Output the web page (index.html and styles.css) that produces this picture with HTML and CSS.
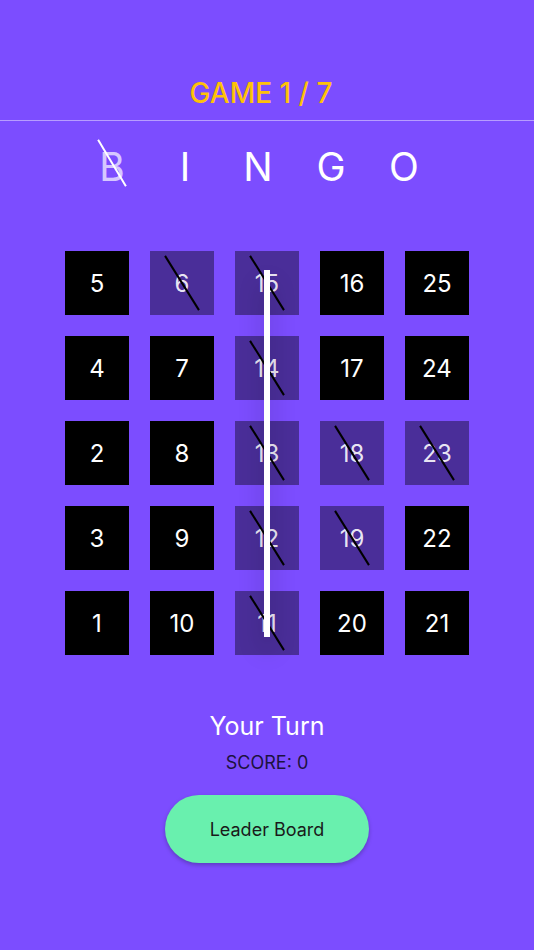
FILE: index.html
```html
<!DOCTYPE html>
<html>
<head>
<meta charset="utf-8">
<link rel="stylesheet" href="styles.css">
</head>
<body>
<div class="screen">
  <header class="header">
    <div class="title">GAME 1 / 7</div>
  </header>
  <div class="bingo">
    <span class="letter done">B</span>
    <span class="letter">I</span>
    <span class="letter">N</span>
    <span class="letter">G</span>
    <span class="letter">O</span>
  </div>
  <div class="board">
    <div class="cell">5</div>
    <div class="cell hit">6</div>
    <div class="cell hit">15</div>
    <div class="cell">16</div>
    <div class="cell">25</div>

    <div class="cell">4</div>
    <div class="cell">7</div>
    <div class="cell hit">14</div>
    <div class="cell">17</div>
    <div class="cell">24</div>

    <div class="cell">2</div>
    <div class="cell">8</div>
    <div class="cell hit">13</div>
    <div class="cell hit">18</div>
    <div class="cell hit">23</div>

    <div class="cell">3</div>
    <div class="cell">9</div>
    <div class="cell hit">12</div>
    <div class="cell hit">19</div>
    <div class="cell">22</div>

    <div class="cell">1</div>
    <div class="cell">10</div>
    <div class="cell hit">11</div>
    <div class="cell">20</div>
    <div class="cell">21</div>
    <div class="strike"></div>
  </div>
  <div class="turn">Your Turn</div>
  <div class="score">SCORE: 0</div>
  <div class="actions">
    <button class="leader">Leader Board</button>
  </div>
</div>
</body>
</html>
```
FILE: styles.css
```css
html, body {
  margin: 0;
  padding: 0;
}
body {
  background: #7c4dff;
  font-family: Inter, "Noto Sans", sans-serif;
  width: 534px;
  height: 950px;
  overflow: hidden;
}
.screen {
  display: flex;
  flex-direction: column;
  align-items: stretch;
}
.header {
  padding: 76px 0 10px;
  border-bottom: 1px solid rgba(255, 255, 255, 0.45);
}
.title {
  text-align: center;
  color: #ffc107;
  font-size: 28px;
  line-height: 34px;
  font-weight: 500;
  padding-right: 12px;
}
.bingo {
  margin-top: 22px;
  display: flex;
  justify-content: center;
  padding-right: 18px;
}
.letter {
  width: 73px;
  text-align: center;
  color: #fff;
  font-size: 39px;
  line-height: 48px;
  position: relative;
}
.letter.done {
  color: rgba(255, 255, 255, 0.7);
}
.letter.done::after {
  content: "";
  position: absolute;
  left: 50%;
  top: 50%;
  width: 2px;
  height: 54px;
  margin-left: -1px;
  margin-top: -31px;
  background: #fff;
  transform: rotate(-31deg);
}
.board {
  margin: 60px auto 0;
  width: 404px;
  display: grid;
  grid-template-columns: repeat(5, 64px);
  grid-auto-rows: 64px;
  gap: 21px;
  position: relative;
}
.cell {
  background: #000;
  color: #fff;
  font-size: 24px;
  display: flex;
  align-items: center;
  justify-content: center;
  position: relative;
}
.cell.hit {
  background: rgba(0, 0, 0, 0.4);
  color: rgba(255, 255, 255, 0.9);
}
.cell.hit::after {
  content: "";
  position: absolute;
  left: 31px;
  top: 0;
  width: 2px;
  height: 64px;
  background: #000;
  transform: rotate(-32deg);
}
.strike {
  position: absolute;
  left: 199px;
  top: 19px;
  width: 6px;
  height: 367px;
  background: #fff;
  box-shadow: 0 14px 24px rgba(0, 0, 0, 0.3);
  z-index: 2;
}
.turn {
  margin-top: 56px;
  text-align: center;
  color: #fff;
  font-size: 25px;
  line-height: 30px;
}
.score {
  margin-top: 12px;
  text-align: center;
  color: #1c1240;
  font-size: 18px;
  line-height: 20px;
}
.actions {
  margin-top: 22px;
  display: flex;
  justify-content: center;
}
.leader {
  width: 204px;
  height: 68px;
  border: none;
  border-radius: 34px;
  background: #69f0ae;
  color: #1a1a1a;
  font-family: Inter, "Noto Sans", sans-serif;
  font-size: 18px;
  box-shadow: 0 2px 4px rgba(0, 0, 0, 0.25);
  padding: 0;
}
```
